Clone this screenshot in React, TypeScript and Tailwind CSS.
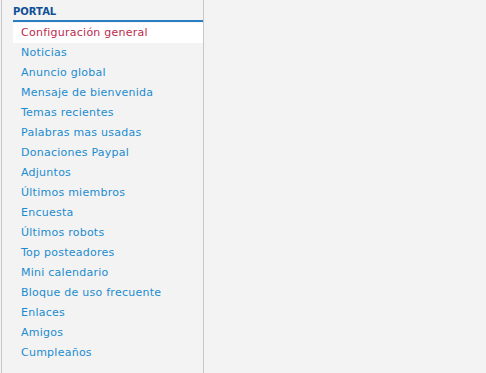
const items = [
  "Configuración general",
  "Noticias",
  "Anuncio global",
  "Mensaje de bienvenida",
  "Temas recientes",
  "Palabras mas usadas",
  "Donaciones Paypal",
  "Adjuntos",
  "Últimos miembros",
  "Encuesta",
  "Últimos robots",
  "Top posteadores",
  "Mini calendario",
  "Bloque de uso frecuente",
  "Enlaces",
  "Amigos",
  "Cumpleaños",
];

export default function App() {
  return (
    <div
      className="flex h-[373px] w-[486px] bg-[#f3f3f3] text-[11px]"
      style={{ fontFamily: "Verdana, 'DejaVu Sans', sans-serif" }}
    >
      <div className="ml-px w-[203px] border-l border-r border-[#c8c8c8] pl-[11px]">
        <div className="border-b-2 border-[#2c7ec2] pt-[6px] pb-[2px] text-[10px] leading-[12px] font-bold text-[#115098]">
          PORTAL
        </div>
        <ul className="pt-px">
          {items.map((item, i) => (
            <li
              key={item}
              className={`h-[20px] pl-2 leading-[20px] tracking-[0.25px] ${
                i === 0 ? "bg-white text-[#bc2a4d]" : "text-[#1b8cd0]"
              }`}
            >
              {item}
            </li>
          ))}
        </ul>
      </div>
      <div className="flex-1" />
    </div>
  );
}
